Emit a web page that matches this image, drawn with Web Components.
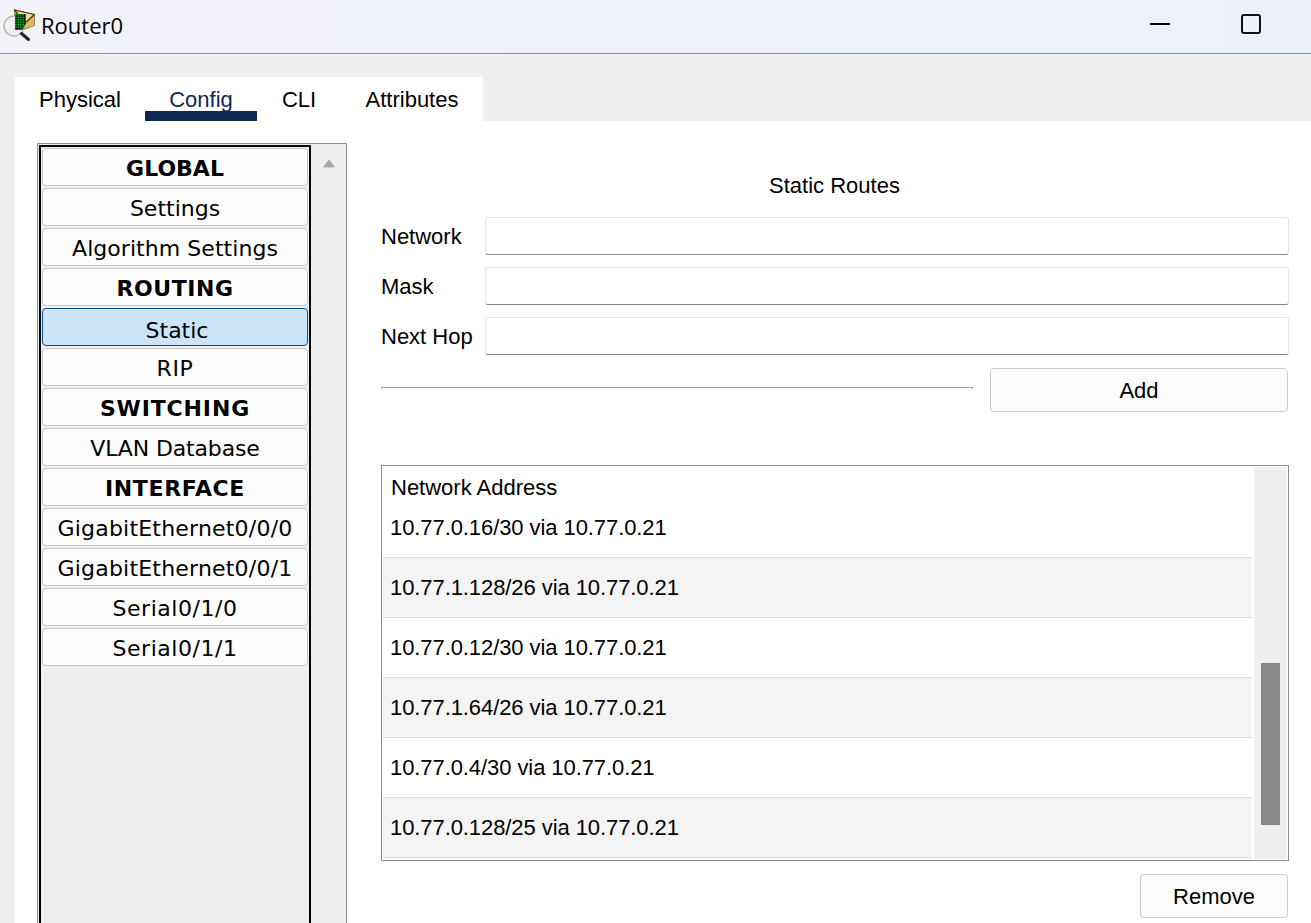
<!DOCTYPE html>
<html><head><meta charset="utf-8">
<style>
html,body{margin:0;height:100%;overflow:hidden;background:#efefef;font-family:"Liberation Sans",Arial,sans-serif}
</style></head><body>
<pt-window>
  <pt-titlebar slot="title">Router0</pt-titlebar>
  <pt-tabs slot="tabs">
    <pt-tab w="130">Physical</pt-tab>
    <pt-tab w="112" active>Config</pt-tab>
    <pt-tab w="84">CLI</pt-tab>
    <pt-tab w="142">Attributes</pt-tab>
  </pt-tabs>
  <pt-sidenav slot="nav">
    <pt-navbtn head>GLOBAL</pt-navbtn>
    <pt-navbtn>Settings</pt-navbtn>
    <pt-navbtn style="letter-spacing:.05px">Algorithm Settings</pt-navbtn>
    <pt-navbtn head style="letter-spacing:.55px">ROUTING</pt-navbtn>
    <pt-navbtn selected>Static</pt-navbtn>
    <pt-navbtn style="letter-spacing:.6px">RIP</pt-navbtn>
    <pt-navbtn head style="letter-spacing:.85px">SWITCHING</pt-navbtn>
    <pt-navbtn style="letter-spacing:-.15px">VLAN Database</pt-navbtn>
    <pt-navbtn head style="letter-spacing:.65px">INTERFACE</pt-navbtn>
    <pt-navbtn style="letter-spacing:.2px">GigabitEthernet0/0/0</pt-navbtn>
    <pt-navbtn style="letter-spacing:.2px">GigabitEthernet0/0/1</pt-navbtn>
    <pt-navbtn style="letter-spacing:.55px">Serial0/1/0</pt-navbtn>
    <pt-navbtn style="letter-spacing:.55px">Serial0/1/1</pt-navbtn>
  </pt-sidenav>
  <pt-routes slot="panel">
    <pt-field>Network</pt-field>
    <pt-field>Mask</pt-field>
    <pt-field>Next Hop</pt-field>
    <pt-route>10.77.0.16/30 via 10.77.0.21</pt-route>
    <pt-route alt>10.77.1.128/26 via 10.77.0.21</pt-route>
    <pt-route>10.77.0.12/30 via 10.77.0.21</pt-route>
    <pt-route alt>10.77.1.64/26 via 10.77.0.21</pt-route>
    <pt-route>10.77.0.4/30 via 10.77.0.21</pt-route>
    <pt-route alt>10.77.0.128/25 via 10.77.0.21</pt-route>
  </pt-routes>
</pt-window>
<script>
function def(name, html, init){
  customElements.define(name, class extends HTMLElement{
    constructor(){super();const r=this.attachShadow({mode:'open'});r.innerHTML=html;}
    connectedCallback(){ if(init) init(this); }
  });
}
def('pt-window',`<style>
:host{display:flex;flex-direction:column;height:923px;overflow:hidden}
.main{flex:1;min-height:0;padding:23px 0 0 15px;display:flex;flex-direction:column}
.body{flex:1;min-height:0;background:#fff;display:flex;align-items:flex-start;padding:22px 22px 0 22px}
.panel{flex:1;min-width:0;margin-left:34px}
</style>
<slot name="title"></slot>
<div class="main"><slot name="tabs"></slot>
<div class="body"><slot name="nav"></slot><div class="panel"><slot name="panel"></slot></div></div></div>`);

def('pt-titlebar',`<style>
:host{display:flex;align-items:center;height:53px;border-bottom:1px solid #8f8f9c;background:linear-gradient(90deg,#f2f2f9,#edf2fa);flex:none;color:#000}
svg{display:block;flex:none}
.ic{align-self:flex-start;margin-top:8px}
.t{font:22px "Open Sans",sans-serif;margin-left:5px;margin-top:-3px}
.sp{flex:1}
.min{width:20px;height:2px;background:#000;margin-right:71px;margin-top:-5px}
.max{width:16px;height:16px;border:2px solid #111;border-radius:3px;margin-right:50px;margin-top:-5px}
</style>
<svg class="ic" width="36" height="36" viewBox="0 8 36 36">
 <path d="M14.500 10L34.500 14.500V25.500L20 31H14.500z" fill="#dcb666" stroke="#8a7238" stroke-width=".8"/>
 <path d="M14.500 10L34.500 14.500L25 23z" fill="#f3dc94" stroke="#3f3210" stroke-width="1.2" stroke-linejoin="round"/>
 <circle cx="14" cy="26" r="10" fill="#eef0ef" fill-opacity=".9" stroke="#b4b9b7" stroke-width="1.4"/>
 <path d="M15 14h11v10l-3 6h-8z" fill="#10a81c"/>
 <path d="M17 14v16M19.500 14v16M22 14v14M24.500 14v11M15 16h11M15 18.500h11M15 21h11M15 23.500h11M15 26h9M15 28.500h8" stroke="#05260a" stroke-width="1"/>
 <path d="M21.500 33.500L28.500 39.500" stroke="#1f2222" stroke-width="3" stroke-linecap="round"/>
</svg>
<span class="t"><slot></slot></span><span class="sp"></span><span class="min"></span><span class="max"></span>`);

def('pt-tabs',`<style>
:host{display:flex;width:468px;height:44px;background:#fff;flex:none}
</style><slot></slot>`);

def('pt-tab',`<style>
:host{display:block;position:relative;text-align:center;font-size:22px;line-height:46px;height:44px;color:#000;box-sizing:border-box}
:host([active]){color:#12284f}
:host([active])::after{content:"";position:absolute;left:0;right:0;bottom:0;height:10px;background:#0f2a52}
</style><slot></slot>`,el=>{el.style.width=el.getAttribute('w')+'px';});

def('pt-sidenav',`<style>
:host{display:flex;flex:none;width:310px;height:800px;box-sizing:border-box;border:1px solid #8e8e95;background:#efefef}
.list{width:272px;box-sizing:border-box;margin:1px 0 0 1px;border:2px solid #000;padding:1px;display:flex;flex-direction:column;gap:2px;height:100%}
.sb{flex:1;display:flex;flex-direction:column;align-items:center;justify-content:space-between;padding:15px 0 0}
svg{display:block}
</style><div class="list"><slot></slot></div>
<div class="sb"><svg width="12" height="9" viewBox="0 0 12 9"><path d="M6 .5L11.500 7.500Q12 8.500 11 8.500H1Q0 8.500 .5 7.500z" fill="#a8a8a8"/></svg>
<svg width="12" height="9" viewBox="0 0 12 9" style="margin-bottom:6px"><path d="M6 8.500L11.500 1.500Q12 .5 11 .5H1Q0 .5 .5 1.500z" fill="#a8a8a8"/></svg></div>`);

def('pt-navbtn',`<style>
:host{display:block;height:38px;box-sizing:border-box;border:1px solid #c6c6c6;border-radius:4px;background:#fdfdfd;text-align:center;font:22px/38px "DejaVu Sans",Verdana,sans-serif;color:#000;flex:none}
:host([head]){font-weight:700}
:host([selected]){background:#cce4f7;border-color:#005499;padding:2px 0 0 4px}
span{display:block;margin-top:1px}
</style><span><slot></slot></span>`);

def('pt-routes',`<style>
:host{display:block;width:908px;font-size:22px;color:#000}
.title{text-align:center;height:74px;padding-top:23px;line-height:40px;margin-left:-1px;box-sizing:border-box}
.add{display:flex;align-items:center;margin-top:13px}
.rule{flex:none;width:592px;height:2px;border:1px solid #a2a2a2;border-bottom:none;box-sizing:border-box;margin-top:-5px}
.table{margin-top:53px;height:396px;box-sizing:border-box;border:1px solid #8b8b92;padding:1px;display:flex}
.rows{flex:none;width:869px}
.hd{height:31px;line-height:42px;padding-left:8px;box-sizing:border-box}
.sb{margin-left:2px;flex:1;background:#efefef;padding:196px 0 0 7px;box-sizing:border-box}
.thumb{width:19px;height:162px;background:#888}
.foot{display:flex;justify-content:flex-end;margin-top:13px;padding-right:1px}
</style>
<div class="title">Static Routes</div>
<slot name="none"></slot>
<div id="fields"><slot id="f"></slot></div>
<div class="add"><div class="rule"></div><pt-button w="298" style="margin-left:17px">Add</pt-button></div>
<div class="table"><div class="rows"><div class="hd">Network Address</div><slot name="rows"></slot></div><div class="sb"><div class="thumb"></div></div></div>
<div class="foot"><pt-button w="148">Remove</pt-button></div>`, el=>{
  el.querySelectorAll('pt-route').forEach(r=>r.slot='rows');
});

def('pt-field',`<style>
:host{display:flex;align-items:center;height:38px;margin-bottom:12px;font-size:22px}
label{width:104px;flex:none;margin-top:1px}
.in{flex:1;height:38px;box-sizing:border-box;border:1px solid #e6e6e6;border-bottom:1px solid #858585;border-radius:3px;background:#fff}
</style><label><slot></slot></label><div class="in"></div>`);

def('pt-button',`<style>
:host{display:block;height:44px;box-sizing:border-box;border:1px solid #cbcbcb;border-radius:4px;background:#fdfdfd;text-align:center;line-height:44px;font-size:22px;flex:none}
</style><slot></slot>`,el=>{el.style.width=el.getAttribute('w')+'px';});

def('pt-route',`<style>
:host{display:block;height:60px;box-sizing:border-box;border-bottom:1px solid #dcdcdc;line-height:59px;padding-left:7px;font-size:22px;letter-spacing:-.08px;background:#fff}
:host([alt]){background:#f4f4f4}
</style><slot></slot>`);
</script>
</body></html>
